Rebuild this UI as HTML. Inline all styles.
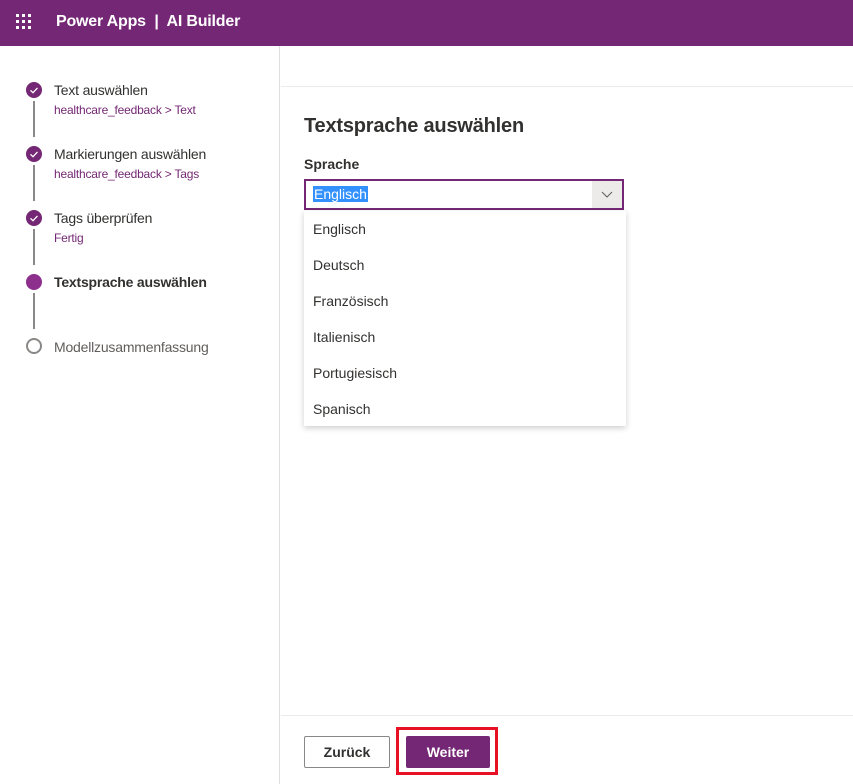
<!DOCTYPE html>
<html><head><style>
*{box-sizing:border-box;margin:0;padding:0}
body{width:853px;height:784px;overflow:hidden;background:#fff;font-family:"Liberation Sans",sans-serif;color:#323130;position:relative}
.top{position:absolute;left:0;top:0;width:853px;height:46px;background:#742774;color:#fff}
.waffle{position:absolute;left:16px;top:14px;width:16px;height:16px}
.waffle i{position:absolute;width:3px;height:3px;background:#fff}
.title{position:absolute;left:56px;top:13px;font-size:16px;font-weight:bold;letter-spacing:-0.2px}
.side{position:absolute;left:0;top:46px;width:280px;height:738px;border-right:1px solid #e1dfdd}
.step{position:absolute;left:54px;font-size:14px;color:#323130;letter-spacing:-0.2px}
.sub{position:absolute;left:54px;font-size:12px;color:#742774;letter-spacing:-0.2px}
.dot{position:absolute;left:26px;width:16px;height:16px;border-radius:50%;background:#742774}
.line{position:absolute;left:33px;width:2px;background:#8a8886}
.hdr{position:absolute;left:281px;top:86px;width:572px;height:1px;background:#edebe9}
.foot{position:absolute;left:281px;top:715px;width:572px;height:1px;background:#edebe9}
.dd{position:absolute;left:304px;top:179px;width:320px;height:31px;border:2px solid #742774}
.menu{position:absolute;left:304px;top:211px;width:322px;height:215px;background:#fff;box-shadow:0 2px 6px rgba(0,0,0,.2)}
.menu div{height:36px;line-height:36px;padding-left:9px;font-size:14px}
</style></head><body>
<div class="top">
<div class="waffle">
<i style="left:0;top:0"></i><i style="left:6px;top:0"></i><i style="left:12px;top:0"></i>
<i style="left:0;top:6px"></i><i style="left:6px;top:6px"></i><i style="left:12px;top:6px"></i>
<i style="left:0;top:12px"></i><i style="left:6px;top:12px"></i><i style="left:12px;top:12px"></i>
</div>
<div class="title">Power Apps &nbsp;|&nbsp; AI Builder</div>
</div>
<div class="side"></div>
<div class="dot" style="top:82px"><svg width="16" height="16"><path d="M4.5 8.3l2.5 2.4 4.5-4.8" stroke="#fff" stroke-width="1.3" fill="none"/></svg></div>
<div class="step" style="top:82px">Text auswählen</div>
<div class="sub" style="top:103px">healthcare_feedback &gt; Text</div>
<div class="line" style="top:101px;height:36px"></div>
<div class="dot" style="top:146px"><svg width="16" height="16"><path d="M4.5 8.3l2.5 2.4 4.5-4.8" stroke="#fff" stroke-width="1.3" fill="none"/></svg></div>
<div class="step" style="top:146px">Markierungen auswählen</div>
<div class="sub" style="top:167px">healthcare_feedback &gt; Tags</div>
<div class="line" style="top:165px;height:36px"></div>
<div class="dot" style="top:210px"><svg width="16" height="16"><path d="M4.5 8.3l2.5 2.4 4.5-4.8" stroke="#fff" stroke-width="1.3" fill="none"/></svg></div>
<div class="step" style="top:210px">Tags überprüfen</div>
<div class="sub" style="top:231px">Fertig</div>
<div class="line" style="top:229px;height:36px"></div>
<div class="dot" style="top:274px;background:#8d2f8d"></div>
<div class="step" style="top:274px;font-weight:bold">Textsprache auswählen</div>
<div class="line" style="top:293px;height:36px"></div>
<div class="dot" style="top:338px;background:#fff;border:2px solid #8a8886"></div>
<div class="step" style="top:339px;color:#605e5c">Modellzusammenfassung</div>
<div class="hdr"></div>
<div style="position:absolute;left:304px;top:115px;font-size:20px;font-weight:bold;color:#323130;letter-spacing:-0.2px">Textsprache auswählen</div>
<div style="position:absolute;left:304px;top:156px;font-size:14px;font-weight:bold">Sprache</div>
<div class="dd">
<span style="position:absolute;left:7px;top:5px;font-size:14px;background:#3390ff;color:#fff;padding:0 1px">Englisch</span>
<div style="position:absolute;right:0;top:0;width:30px;height:27px;background:#edebe9"><svg width="30" height="27"><path d="M10 11l5 5 5-5" stroke="#605e5c" fill="none"/></svg></div>
</div>
<div class="menu"><div>Englisch</div><div>Deutsch</div><div>Französisch</div><div>Italienisch</div><div>Portugiesisch</div><div>Spanisch</div></div>
<div class="foot"></div>
<div style="position:absolute;left:304px;top:736px;width:86px;height:32px;border:1px solid #8a8886;border-radius:2px;text-align:center;line-height:30px;font-size:14px;font-weight:bold">Zurück</div>
<div style="position:absolute;left:396px;top:727px;width:102px;height:48px;border:3px solid #e81123"></div>
<div style="position:absolute;left:406px;top:736px;width:84px;height:32px;background:#742774;border-radius:2px;text-align:center;line-height:32px;font-size:14px;font-weight:bold;color:#fff">Weiter</div>
</body></html>
